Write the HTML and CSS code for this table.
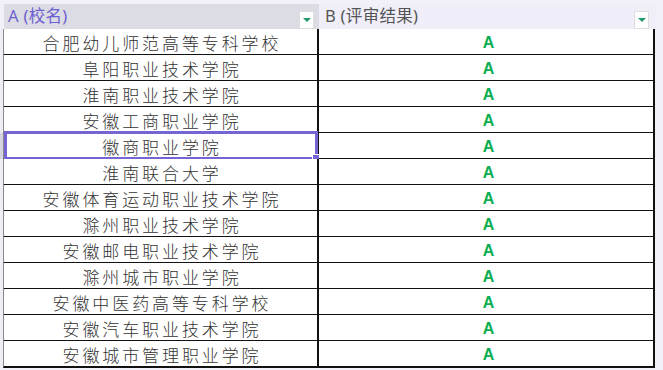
FILE: index.html
```html
<!DOCTYPE html>
<html lang="zh">
<head>
<meta charset="utf-8">
<link rel="stylesheet" href="styles.css">
</head>
<body>
<div class="sheet">
  <div class="topstrip"></div>
  <div class="header">
    <div class="rh"></div>
    <div class="hcell hcell-a">
      <span class="htext sel">A (校名)</span>
      <span class="filter"><span class="tri"></span></span>
    </div>
    <div class="hcell hcell-b">
      <span class="htext">B (评审结果)</span>
      <span class="filter"><span class="tri"></span></span>
    </div>
    <div class="tail"></div>
  </div>
  <div class="rows">
    <div class="row"><div class="rh"></div><div class="cell a">合肥幼儿师范高等专科学校</div><div class="cell b">A</div><div class="tail"></div></div>
    <div class="row"><div class="rh"></div><div class="cell a">阜阳职业技术学院</div><div class="cell b">A</div><div class="tail"></div></div>
    <div class="row"><div class="rh"></div><div class="cell a">淮南职业技术学院</div><div class="cell b">A</div><div class="tail"></div></div>
    <div class="row"><div class="rh"></div><div class="cell a">安徽工商职业学院</div><div class="cell b">A</div><div class="tail"></div></div>
    <div class="row active"><div class="rh"></div><div class="cell a">徽商职业学院<span class="selbox"><span class="handle"></span></span></div><div class="cell b">A</div><div class="tail"></div></div>
    <div class="row"><div class="rh"></div><div class="cell a">淮南联合大学</div><div class="cell b">A</div><div class="tail"></div></div>
    <div class="row"><div class="rh"></div><div class="cell a">安徽体育运动职业技术学院</div><div class="cell b">A</div><div class="tail"></div></div>
    <div class="row"><div class="rh"></div><div class="cell a">滁州职业技术学院</div><div class="cell b">A</div><div class="tail"></div></div>
    <div class="row"><div class="rh"></div><div class="cell a">安徽邮电职业技术学院</div><div class="cell b">A</div><div class="tail"></div></div>
    <div class="row"><div class="rh"></div><div class="cell a">滁州城市职业学院</div><div class="cell b">A</div><div class="tail"></div></div>
    <div class="row"><div class="rh"></div><div class="cell a">安徽中医药高等专科学校</div><div class="cell b">A</div><div class="tail"></div></div>
    <div class="row"><div class="rh"></div><div class="cell a">安徽汽车职业技术学院</div><div class="cell b">A</div><div class="tail"></div></div>
    <div class="row"><div class="rh"></div><div class="cell a">安徽城市管理职业学院</div><div class="cell b">A</div><div class="tail"></div></div>
  </div>
</div>
</body>
</html>
```
FILE: styles.css
```css
html, body {
  margin: 0;
  padding: 0;
  background: #f2f1fa;
  overflow: hidden;
}
.sheet {
  width: 663px;
  height: 370px;
  font-family: "Noto Sans CJK SC", sans-serif;
}
.topstrip {
  height: 4px;
  background: #f2f1fa;
}
.header {
  display: grid;
  grid-template-columns: 4px 315px 337px 7px;
  height: 25px;
}
.header .rh { background: #f2f1fa; }
.hcell {
  display: flex;
  align-items: flex-start;
  justify-content: space-between;
  box-sizing: border-box;
}
.hcell-a {
  background: #dcdce5;
  border-bottom: 2px solid #7365d2;
  padding: 0 5px 0 4px;
}
.hcell-b {
  background: #efeef9;
  border-bottom: 1px solid #d6d5de;
  padding: 0 7px 0 6px;
}
.htext {
  font-family: "Noto Sans", "Noto Sans CJK SC", sans-serif;
  font-size: 16.5px;
  letter-spacing: 0.3px;
  line-height: 20px;
  padding-top: 2px;
  color: #555;
}
.htext.sel { color: #6d5fd0; }
.filter {
  margin-top: 7px;
  width: 13px;
  height: 16px;
  background: #fff;
  border: 1px solid #dedede;
  display: flex;
  align-items: center;
  justify-content: center;
}
.tri {
  width: 0;
  height: 0;
  border-left: 4px solid transparent;
  border-right: 4px solid transparent;
  border-top: 4px solid #23996a;
}
.header .tail { background: #f2f1fa; }
.row {
  display: grid;
  grid-template-columns: 3px 316px 336px 8px;
  height: 26px;
}
.row .rh {
  background: #efeef8;
}
.row.active .rh { background: #d5d4de; }
.cell {
  position: relative;
  background: #fff;
  box-sizing: border-box;
  border-bottom: 2px solid #111;
  display: flex;
  align-items: center;
  justify-content: center;
  padding-top: 3px;
}
.cell.a {
  border-left: 1px solid #8a8a8a;
  border-right: 2px solid #111;
  font-size: 17px;
  letter-spacing: 2.9px;
  padding-left: 3px;
  color: #333;
  font-weight: 300;
  line-height: 22px;
}
.cell.b {
  border-right: 2px solid #111;
  font-family: "Liberation Sans", sans-serif;
  font-weight: bold;
  font-size: 16px;
  padding-left: 5px;
  padding-top: 2px;
  color: #0aae4f;
}
.row .tail { background: #f2f1fa; }
.selbox {
  position: absolute;
  left: 0;
  top: -2px;
  right: -1px;
  bottom: -2px;
  border: 3px solid #7465d3;
}
.handle {
  position: absolute;
  right: -5px;
  bottom: -5px;
  width: 6px;
  height: 6px;
  background: #7465d3;
  border: 1px solid #fff;
}
```
